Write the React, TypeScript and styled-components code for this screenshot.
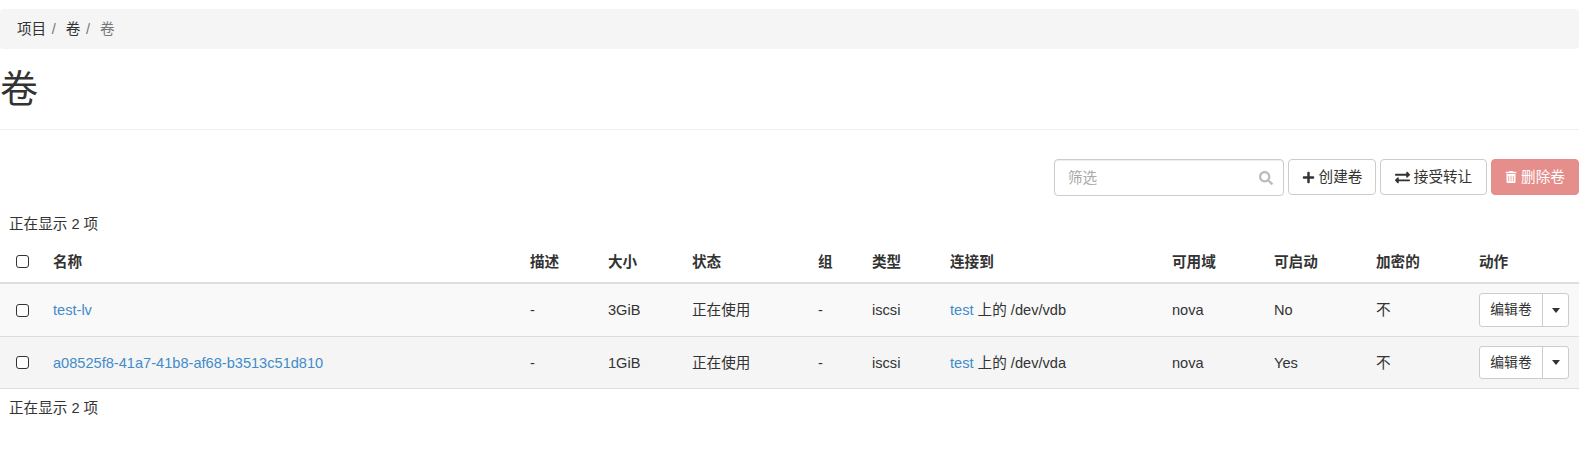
import React from "react";
import styled, { createGlobalStyle } from "styled-components";
import { FaPlus, FaExchangeAlt, FaTrashAlt, FaSearch } from "react-icons/fa";

const Global = createGlobalStyle`
  html, body { margin: 0; padding: 0; background: #fff; }
  body {
    font-family: "Liberation Sans", "Noto Sans CJK SC", sans-serif;
    font-size: 14.6px;
    line-height: 20px;
    color: #333;
  }
`;

const Page = styled.div`
  width: 1579px;
  padding-top: 9px;
`;

const Breadcrumb = styled.ol`
  display: flex;
  align-items: center;
  height: 40px;
  margin: 0;
  padding: 0 0 0 17px;
  list-style: none;
  background: #f5f5f5;
  border-radius: 4px;
`;

const Crumb = styled.li<{ $active?: boolean }>`
  color: ${(p) => (p.$active ? "#777" : "#333")};
`;

const Sep = styled.li`
  color: #777;
  padding: 0 10px 0 5.5px;
`;

const TitleBlock = styled.div`
  height: 81px;
  border-bottom: 1px solid #eee;
  box-sizing: border-box;
`;

const Title = styled.h1`
  margin: 0;
  padding-top: 20px;
  font-size: 38px;
  line-height: 40px;
  font-weight: 400;
`;

const Toolbar = styled.div`
  display: flex;
  justify-content: flex-end;
  align-items: flex-start;
  gap: 4px;
  margin-top: 29px;
`;

const SearchBox = styled.div`
  position: relative;
  width: 230px;
`;

const SearchInput = styled.input`
  display: block;
  width: 100%;
  height: 37px;
  box-sizing: border-box;
  padding: 0 34px 0 13px;
  border: 1px solid #ccc;
  border-radius: 4px;
  font: inherit;
  color: #555;
  box-shadow: inset 0 1px 1px rgba(0, 0, 0, 0.075);
  &::placeholder { color: #aaa; opacity: 1; }
`;

const SearchIcon = styled.span`
  position: absolute;
  right: 11px;
  top: 12px;
  display: flex;
  color: #bbb;
  font-size: 14px;
`;

const Button = styled.button<{ $danger?: boolean; $w: number }>`
  display: inline-flex;
  align-items: center;
  justify-content: center;
  gap: 4px;
  width: ${(p) => p.$w}px;
  height: 36px;
  padding: 0;
  box-sizing: border-box;
  font: inherit;
  border-radius: 4px;
  border: 1px solid ${(p) => (p.$danger ? "#e58c8a" : "#ccc")};
  background: ${(p) => (p.$danger ? "#e58e8c" : "#fff")};
  color: ${(p) => (p.$danger ? "#fff" : "#333")};
`;

const Count = styled.div<{ $top: number }>`
  padding: ${(p) => p.$top}px 0 0 9px;
  height: 20px;
`;

const Table = styled.table`
  width: 1579px;
  table-layout: fixed;
  border-collapse: separate;
  border-spacing: 0;
  margin-top: 7px;
`;

const Col = styled.col<{ $w: number }>`
  width: ${(p) => p.$w}px;
`;

const Th = styled.th`
  height: 43px;
  padding: 0 8px;
  text-align: left;
  font-weight: 700;
  border-bottom: 2px solid #ddd;
  box-sizing: border-box;
`;

const Row = styled.tr<{ $bg: string }>`
  background: ${(p) => p.$bg};
`;

const Td = styled.td<{ $h: number }>`
  height: ${(p) => p.$h}px;
  padding: 0 8px;
  border-bottom: 1px solid #ddd;
  box-sizing: border-box;
`;

const CheckCell = styled.div`
  display: flex;
  padding-left: 8px;
`;

const Check = styled.input.attrs({ type: "checkbox" })`
  appearance: none;
  width: 13px;
  height: 13px;
  margin: 0;
  border: 1px solid #333;
  border-radius: 3px;
  background: #fff;
`;

const Link = styled.a`
  color: #428bca;
  text-decoration: none;
`;

const Split = styled.div<{ $h: number }>`
  display: flex;
  height: ${(p) => p.$h}px;
  width: 90px;
  box-sizing: border-box;
  border: 1px solid #ccc;
  border-radius: 3px;
  background: #fff;
  font-size: 13.8px;
`;

const SplitMain = styled.button`
  flex: 1;
  padding: 0;
  border: 0;
  background: none;
  font: inherit;
  color: #333;
`;

const SplitCaret = styled.button`
  display: flex;
  align-items: center;
  justify-content: center;
  width: 26px;
  padding: 0;
  border: 0;
  border-left: 1px solid #ccc;
  background: none;
  &::after {
    content: "";
    border-top: 5px solid #333;
    border-left: 4.5px solid transparent;
    border-right: 4.5px solid transparent;
  }
`;

const widths = [45, 477, 78, 84, 126, 54, 78, 222, 102, 102, 103, 108];
const heads = ["名称", "描述", "大小", "状态", "组", "类型", "连接到", "可用域", "可启动", "加密的", "动作"];
const rows = [
  { bg: "#f9f9f9", h: 53, btn: 34, name: "test-lv", size: "3GiB", dev: "/dev/vdb", boot: "No" },
  { bg: "#f5f5f5", h: 52, btn: 33, name: "a08525f8-41a7-41b8-af68-b3513c51d810", size: "1GiB", dev: "/dev/vda", boot: "Yes" },
];

export default function App() {
  return (
    <Page>
      <Global />
      <Breadcrumb>
        <Crumb>项目</Crumb>
        <Sep>/</Sep>
        <Crumb>卷</Crumb>
        <Sep>/</Sep>
        <Crumb $active>卷</Crumb>
      </Breadcrumb>
      <TitleBlock>
        <Title>卷</Title>
      </TitleBlock>
      <Toolbar>
        <SearchBox>
          <SearchInput placeholder="筛选" />
          <SearchIcon><FaSearch /></SearchIcon>
        </SearchBox>
        <Button $w={88}><FaPlus size={13} />创建卷</Button>
        <Button $w={107}><FaExchangeAlt size={15} />接受转让</Button>
        <Button $w={88} $danger><FaTrashAlt size={12} />删除卷</Button>
      </Toolbar>
      <Count $top={18}>正在显示 2 项</Count>
      <Table>
        <colgroup>
          {widths.map((w, i) => <Col key={i} $w={w} />)}
        </colgroup>
        <thead>
          <tr>
            <Th><CheckCell><Check /></CheckCell></Th>
            {heads.map((h) => <Th key={h}>{h}</Th>)}
          </tr>
        </thead>
        <tbody>
          {rows.map((r) => (
            <Row key={r.name} $bg={r.bg}>
              <Td $h={r.h}><CheckCell><Check /></CheckCell></Td>
              <Td $h={r.h}><Link>{r.name}</Link></Td>
              <Td $h={r.h}>-</Td>
              <Td $h={r.h}>{r.size}</Td>
              <Td $h={r.h}>正在使用</Td>
              <Td $h={r.h}>-</Td>
              <Td $h={r.h}>iscsi</Td>
              <Td $h={r.h}><Link>test</Link> 上的 {r.dev}</Td>
              <Td $h={r.h}>nova</Td>
              <Td $h={r.h}>{r.boot}</Td>
              <Td $h={r.h}>不</Td>
              <Td $h={r.h}>
                <Split $h={r.btn}>
                  <SplitMain>编辑卷</SplitMain>
                  <SplitCaret />
                </Split>
              </Td>
            </Row>
          ))}
        </tbody>
      </Table>
      <Count $top={9}>正在显示 2 项</Count>
    </Page>
  );
}
